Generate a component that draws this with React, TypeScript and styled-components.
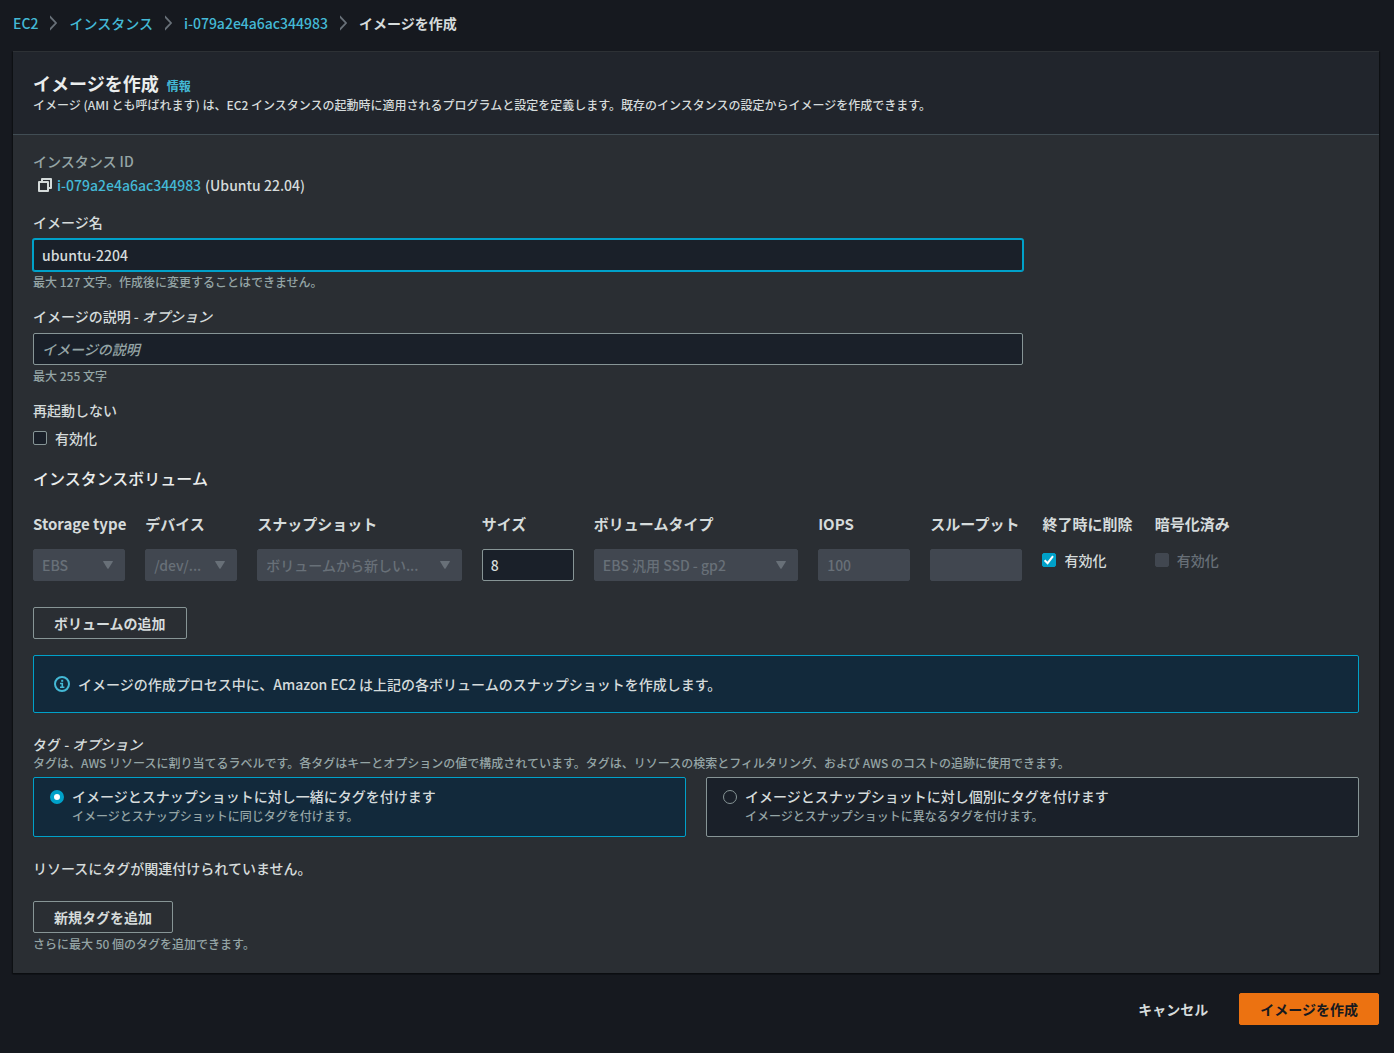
import React, { useState } from "react";
import styled, { createGlobalStyle, css } from "styled-components";

const color = {
  page: "#16191f",
  panel: "#2a2e33",
  panelHeader: "#21252c",
  divider: "#414d54",
  field: "#1a2029",
  fieldBorder: "#879596",
  disabled: "#414750",
  disabledText: "#687078",
  text: "#d5dbdb",
  heading: "#eaeded",
  muted: "#95a5a6",
  link: "#44b9d6",
  accent: "#00a1c9",
  accentFill: "#12293b",
  primary: "#ec7211",
};

const GlobalStyle = createGlobalStyle`
  *, *::before, *::after { box-sizing: border-box; }
  body {
    margin: 0;
    background: ${color.page};
    color: ${color.text};
    font: 500 14px/20px "Noto Sans CJK JP", "Noto Sans", sans-serif;
  }
  button, input, select { font: inherit; }
  h1, h2, p { margin: 0; }
`;

const Page = styled.main`
  min-height: 100vh;
  padding: 13px 15px 28px 13px;
`;

const Breadcrumbs = styled.nav`
  display: flex;
  flex-wrap: wrap;
  align-items: center;
  gap: 12px;
  margin-bottom: 18px;
`;

const Current = styled.span`
  font-weight: 700;
`;

const Link = styled.a<{ $small?: boolean }>`
  color: ${color.link};
  text-decoration: none;
  ${(p) => p.$small && css`
    font-size: 12px;
    font-weight: 700;
    line-height: 16px;
  `}
`;

const Panel = styled.section`
  background: ${color.panel};
  border-top: 1px solid #2d3135;
  box-shadow: 0 1px 1px 0 #0b0d10, 1px 1px 1px 0 #0f1115, -1px 1px 1px 0 #0f1115;
`;

const PanelHeader = styled.header`
  padding: 20px 20px 18px;
  background: ${color.panelHeader};
  border-bottom: 1px solid ${color.divider};
`;

const TitleRow = styled.div`
  display: flex;
  align-items: baseline;
  gap: 8px;
`;

const Title = styled.h1`
  color: ${color.heading};
  font-size: 18px;
  line-height: 22px;
`;

const Small = styled.p<{ $muted?: boolean }>`
  font-size: 12px;
  line-height: 22px;
  color: ${(p) => (p.$muted ? color.muted : color.text)};
`;

const PanelBody = styled.div`
  padding: 16px 20px 18px;
`;

const Columns = styled.div`
  display: grid;
  grid-template-columns: repeat(12, minmax(0, 1fr));
  column-gap: 20px;
`;

const Field = styled.div`
  grid-column: span 9;
  margin-bottom: 13px;
`;

const Label = styled.label`
  display: block;
  margin-bottom: 7px;
`;

const GroupLabel = styled.div`
  margin-bottom: 7px;
`;

const InstanceField = styled.div`
  margin-bottom: 17px;
`;

const InstanceLabel = styled.div`
  margin-bottom: 4px;
  color: ${color.muted};
`;

const InstanceValue = styled.div`
  display: flex;
  align-items: center;
  gap: 4px;
  padding-left: 4px;
`;

const IconButton = styled.button`
  display: flex;
  padding: 0;
  border: 0;
  background: none;
  color: ${color.text};
`;

const TextInput = styled.input<{ $active?: boolean }>`
  display: block;
  width: 100%;
  height: 32px;
  padding: 0 8px;
  border: 1px solid ${(p) => (p.$active ? color.accent : color.fieldBorder)};
  border-radius: 2px;
  box-shadow: ${(p) => (p.$active ? `0 0 0 1px ${color.accent}` : "none")};
  outline: none;
  background: ${color.field};
  color: ${color.text};
  &::placeholder {
    color: ${color.muted};
    opacity: 1;
    font-style: italic;
  }
  &:disabled {
    border-color: ${color.disabled};
    background: ${color.disabled};
    color: ${color.disabledText};
  }
`;

const CheckLabel = styled.label<{ $disabled?: boolean }>`
  display: flex;
  align-items: center;
  gap: 8px;
  line-height: 22px;
  color: ${(p) => (p.$disabled ? color.disabledText : color.text)};
`;

const checkMark = encodeURIComponent(
  '<svg xmlns="http://www.w3.org/2000/svg" viewBox="0 0 14 14"><path d="M2.6 7.2l3 3 5.4-7" fill="none" stroke="#fff" stroke-width="2"/></svg>'
);

const Checkbox = styled.input`
  appearance: none;
  flex: none;
  width: 14px;
  height: 14px;
  margin: 0;
  border: 1px solid ${color.fieldBorder};
  border-radius: 2px;
  background: ${color.field};
  &:checked {
    border-color: ${color.accent};
    background: ${color.accent} url("data:image/svg+xml,${checkMark}") center / 14px 14px no-repeat;
  }
  &:disabled {
    border-color: ${color.disabled};
    background: ${color.disabled};
  }
`;

const SectionTitle = styled.h2`
  margin: 18px 0 24px;
  color: ${color.heading};
  font-size: 16px;
  font-weight: 500;
  line-height: 22px;
`;

const VolumeColumn = styled.div<{ $span?: number }>`
  grid-column: span ${(p) => p.$span ?? 1};
`;

const VolumeLabel = styled.label`
  display: block;
  margin-bottom: 14px;
  font-size: 15px;
  font-weight: 700;
  line-height: 22px;
  white-space: nowrap;
`;

const SelectBox = styled.div`
  position: relative;
`;

const Select = styled.select`
  appearance: none;
  display: block;
  width: 100%;
  height: 32px;
  padding: 0 28px 0 8px;
  border: 1px solid ${color.disabled};
  border-radius: 2px;
  background: ${color.disabled};
  color: ${color.disabledText};
  opacity: 1;
`;

const Arrow = styled.svg`
  position: absolute;
  top: 12px;
  right: 12px;
  fill: ${color.disabledText};
  pointer-events: none;
`;

const Button = styled.button<{ $kind?: "primary" | "plain" }>`
  height: 32px;
  padding: 0 20px;
  border: 1px solid ${color.fieldBorder};
  border-radius: 2px;
  background: transparent;
  color: ${color.text};
  font-weight: 700;
  ${(p) => p.$kind === "primary" && css`
    border-color: ${color.primary};
    background: ${color.primary};
    color: ${color.page};
  `}
  ${(p) => p.$kind === "plain" && css`
    border-color: transparent;
  `}
`;

const AddVolume = styled.div`
  margin: 26px 0 16px;
`;

const Notice = styled.div`
  display: flex;
  align-items: center;
  gap: 8px;
  margin-bottom: 21px;
  padding: 18px 20px;
  border: 1px solid ${color.accent};
  border-radius: 2px;
  background: ${color.accentFill};
`;

const TagIntro = styled.p`
  margin-bottom: 5px;
  color: ${color.muted};
  font-size: 12px;
  line-height: 18px;
`;

const Tiles = styled.div`
  display: grid;
  grid-template-columns: 1fr 1fr;
  gap: 20px;
`;

const Tile = styled.label<{ $selected: boolean }>`
  display: grid;
  grid-template-columns: 14px 1fr;
  column-gap: 8px;
  padding: 8px 16px 12px;
  border: 1px solid ${(p) => (p.$selected ? color.accent : color.fieldBorder)};
  border-radius: 2px;
  background: ${(p) => (p.$selected ? color.accentFill : color.field)};
`;

const Radio = styled.input`
  appearance: none;
  width: 14px;
  height: 14px;
  margin: 4px 0;
  border: 1px solid ${color.fieldBorder};
  border-radius: 50%;
  background: ${color.field};
  &:checked {
    border: 4px solid ${color.accent};
    background: #fff;
  }
`;

const TileHint = styled.span`
  grid-column: 2;
  color: ${color.muted};
  font-size: 12px;
  line-height: 16px;
`;

const EmptyTags = styled.div`
  margin: 21px 0 23px;
`;

const Actions = styled.footer`
  display: flex;
  justify-content: flex-end;
  gap: 10px;
  margin-top: 20px;
`;

const Chevron = () => (
  <svg width="7" height="16" viewBox="0 0 7 16" fill="none" stroke="#687078" strokeWidth="1.8" aria-hidden="true">
    <path d="M-.4 1.2L6 8L-.4 14.8" overflow="visible" />
  </svg>
);

const CopyIcon = () => (
  <svg width="16" height="16" viewBox="0 0 16 16" fill="none" stroke="currentColor" strokeWidth="2" strokeLinejoin="round" aria-hidden="true">
    <path d="M2 5h9v9H2zM5 5V2h9v9h-3" />
  </svg>
);

const InfoIcon = () => (
  <svg width="16" height="16" viewBox="0 0 16 16" fill="none" stroke={color.link} aria-hidden="true">
    <circle cx="8" cy="8" r="7" strokeWidth="2" />
    <path d="M6 7.5h2.3V11M6 11.2h4.4" strokeWidth="1.6" />
    <path d="M7.2 4.8h2" strokeWidth="2" />
  </svg>
);

type DisabledSelectProps = { id: string; value: string };

const DisabledSelect = ({ id, value }: DisabledSelectProps) => (
  <SelectBox>
    <Select id={id} disabled>
      <option>{value}</option>
    </Select>
    <Arrow width="10" height="8" viewBox="0 0 10 8" aria-hidden="true">
      <path d="M.6 0h8.8q.8 0 .4.7L5.6 7.4q-.6.8-1.2 0L.2.7Q-.2 0 .6 0z" />
    </Arrow>
  </SelectBox>
);

const tagModes = [
  {
    id: "together",
    title: "イメージとスナップショットに対し一緒にタグを付けます",
    hint: "イメージとスナップショットに同じタグを付けます。",
  },
  {
    id: "separate",
    title: "イメージとスナップショットに対し個別にタグを付けます",
    hint: "イメージとスナップショットに異なるタグを付けます。",
  },
];

export default function App() {
  const [name, setName] = useState("ubuntu-2204");
  const [size, setSize] = useState("8");
  const [tagMode, setTagMode] = useState("together");

  return (
    <>
      <GlobalStyle />
      <Page lang="ja">
        <Breadcrumbs>
          <Link href="#ec2">EC2</Link>
          <Chevron />
          <Link href="#instances">インスタンス</Link>
          <Chevron />
          <Link href="#instance">i-079a2e4a6ac344983</Link>
          <Chevron />
          <Current>イメージを作成</Current>
        </Breadcrumbs>

        <Panel>
          <PanelHeader>
            <TitleRow>
              <Title>イメージを作成</Title>
              <Link $small href="#info">情報</Link>
            </TitleRow>
            <Small>
              イメージ (AMI とも呼ばれます) は、EC2 インスタンスの起動時に適用されるプログラムと設定を定義します。既存のインスタンスの設定からイメージを作成できます。
            </Small>
          </PanelHeader>

          <PanelBody>
            <InstanceField>
              <InstanceLabel>インスタンス ID</InstanceLabel>
              <InstanceValue>
                <IconButton type="button" aria-label="コピー"><CopyIcon /></IconButton>
                <Link href="#instance">i-079a2e4a6ac344983</Link>
                <span>(Ubuntu 22.04)</span>
              </InstanceValue>
            </InstanceField>

            <Columns>
              <Field>
                <Label htmlFor="name">イメージ名</Label>
                <TextInput id="name" $active value={name} onChange={(e) => setName(e.target.value)} />
                <Small $muted>最大 127 文字。作成後に変更することはできません。</Small>
              </Field>
              <Field>
                <Label htmlFor="description">イメージの説明 - <em>オプション</em></Label>
                <TextInput id="description" placeholder="イメージの説明" />
                <Small $muted>最大 255 文字</Small>
              </Field>
            </Columns>

            <GroupLabel>再起動しない</GroupLabel>
            <CheckLabel>
              <Checkbox type="checkbox" />
              有効化
            </CheckLabel>

            <SectionTitle>インスタンスボリューム</SectionTitle>
            <Columns>
              <VolumeColumn>
                <VolumeLabel htmlFor="storage">Storage type</VolumeLabel>
                <DisabledSelect id="storage" value="EBS" />
              </VolumeColumn>
              <VolumeColumn>
                <VolumeLabel htmlFor="device">デバイス</VolumeLabel>
                <DisabledSelect id="device" value="/dev/..." />
              </VolumeColumn>
              <VolumeColumn $span={2}>
                <VolumeLabel htmlFor="snapshot">スナップショット</VolumeLabel>
                <DisabledSelect id="snapshot" value="ボリュームから新しい..." />
              </VolumeColumn>
              <VolumeColumn>
                <VolumeLabel htmlFor="size">サイズ</VolumeLabel>
                <TextInput id="size" value={size} onChange={(e) => setSize(e.target.value)} />
              </VolumeColumn>
              <VolumeColumn $span={2}>
                <VolumeLabel htmlFor="volume-type">ボリュームタイプ</VolumeLabel>
                <DisabledSelect id="volume-type" value="EBS 汎用 SSD - gp2" />
              </VolumeColumn>
              <VolumeColumn>
                <VolumeLabel htmlFor="iops">IOPS</VolumeLabel>
                <TextInput id="iops" disabled value="100" readOnly />
              </VolumeColumn>
              <VolumeColumn>
                <VolumeLabel htmlFor="throughput">スループット</VolumeLabel>
                <TextInput id="throughput" disabled />
              </VolumeColumn>
              <VolumeColumn>
                <VolumeLabel htmlFor="delete">終了時に削除</VolumeLabel>
                <CheckLabel>
                  <Checkbox id="delete" type="checkbox" defaultChecked />
                  有効化
                </CheckLabel>
              </VolumeColumn>
              <VolumeColumn>
                <VolumeLabel htmlFor="encrypted">暗号化済み</VolumeLabel>
                <CheckLabel $disabled>
                  <Checkbox id="encrypted" type="checkbox" disabled />
                  有効化
                </CheckLabel>
              </VolumeColumn>
            </Columns>

            <AddVolume>
              <Button type="button">ボリュームの追加</Button>
            </AddVolume>

            <Notice>
              <InfoIcon />
              <span>イメージの作成プロセス中に、Amazon EC2 は上記の各ボリュームのスナップショットを作成します。</span>
            </Notice>

            <div>タグ - <em>オプション</em></div>
            <TagIntro>
              タグは、AWS リソースに割り当てるラベルです。各タグはキーとオプションの値で構成されています。タグは、リソースの検索とフィルタリング、および AWS のコストの追跡に使用できます。
            </TagIntro>
            <Tiles>
              {tagModes.map((mode) => (
                <Tile key={mode.id} $selected={tagMode === mode.id}>
                  <Radio
                    type="radio"
                    name="tag-mode"
                    checked={tagMode === mode.id}
                    onChange={() => setTagMode(mode.id)}
                  />
                  <span>{mode.title}</span>
                  <TileHint>{mode.hint}</TileHint>
                </Tile>
              ))}
            </Tiles>

            <EmptyTags>リソースにタグが関連付けられていません。</EmptyTags>
            <Button type="button">新規タグを追加</Button>
            <Small $muted>さらに最大 50 個のタグを追加できます。</Small>
          </PanelBody>
        </Panel>

        <Actions>
          <Button type="button" $kind="plain">キャンセル</Button>
          <Button type="submit" $kind="primary">イメージを作成</Button>
        </Actions>
      </Page>
    </>
  );
}
